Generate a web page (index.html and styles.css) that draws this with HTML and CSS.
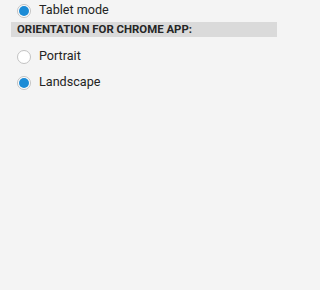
FILE: index.html
```html
<!DOCTYPE html>
<html>
<head>
<meta charset="utf-8">
<link rel="stylesheet" href="styles.css">
</head>
<body>
<div class="panel">
  <div class="option first">
    <span class="radio checked"></span>
    <span class="label">Tablet mode</span>
  </div>
  <div class="section">ORIENTATION FOR CHROME APP:</div>
  <div class="option spaced">
    <span class="radio"></span>
    <span class="label">Portrait</span>
  </div>
  <div class="option">
    <span class="radio checked"></span>
    <span class="label">Landscape</span>
  </div>
</div>
</body>
</html>
```
FILE: styles.css
```css
html, body {
  margin: 0;
  padding: 0;
  background: #f4f4f4;
  width: 290px;
  height: 290px;
  overflow: hidden;
}
.panel {
  padding: 0 13px 0 11px;
  font-family: Roboto, "Liberation Sans", sans-serif;
  color: #232323;
}
.option {
  display: flex;
  align-items: center;
  height: 26px;
}
.option.first {
  height: 21px;
}
.option.spaced {
  margin-top: 6.5px;
}
.radio {
  box-sizing: border-box;
  width: 14px;
  height: 14px;
  margin-left: 6px;
  border-radius: 50%;
  border: 1px solid #c2c2c2;
  background: #ffffff;
  position: relative;
  flex: none;
}
.radio.checked::after {
  content: "";
  position: absolute;
  left: 1px;
  top: 1px;
  width: 10px;
  height: 10px;
  border-radius: 50%;
  background: #1b8bd6;
}
.label {
  margin-left: 8px;
  font-size: 12.6px;
  line-height: 1;
}
.section {
  margin-top: 1px;
  height: 15px;
  line-height: 15px;
  background: #dadada;
  padding-left: 6px;
  font-size: 11.4px;
  font-weight: bold;
  color: #262626;
}
```
